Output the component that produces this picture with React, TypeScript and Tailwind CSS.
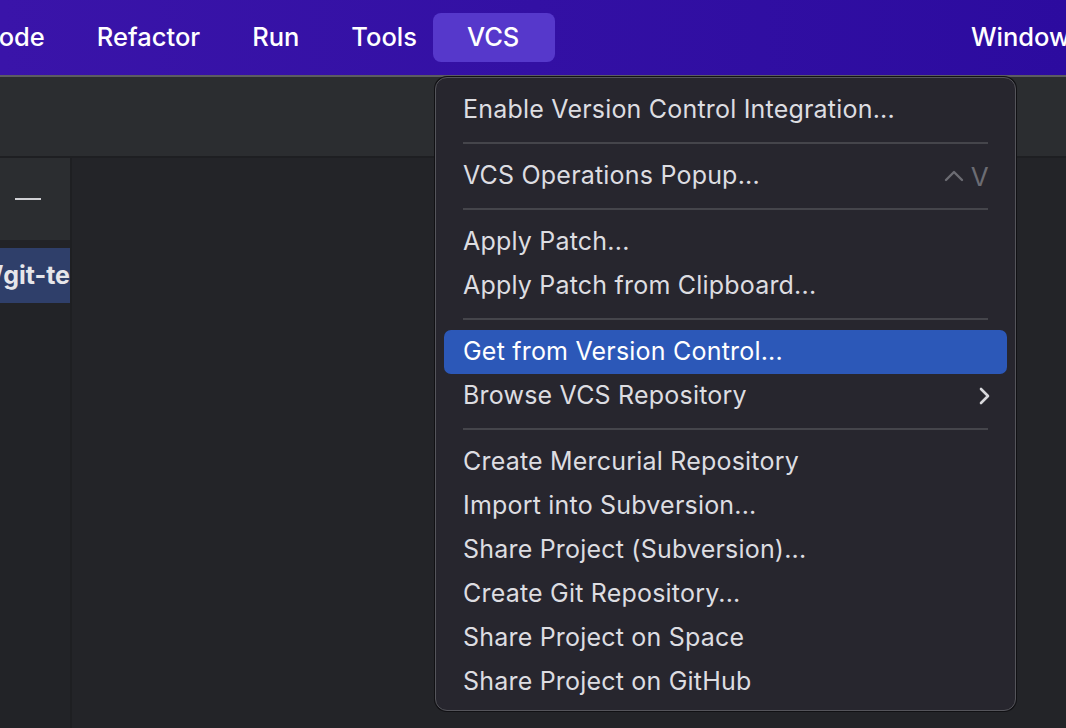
import React from "react";

const font = { fontFamily: "Inter, 'Noto Sans', sans-serif" };

type Item = { label: string; shortcut?: string; submenu?: boolean; active?: boolean } | "sep";

const items: Item[] = [
  { label: "Enable Version Control Integration..." },
  "sep",
  { label: "VCS Operations Popup...", shortcut: "^V" },
  "sep",
  { label: "Apply Patch..." },
  { label: "Apply Patch from Clipboard..." },
  "sep",
  { label: "Get from Version Control...", active: true },
  { label: "Browse VCS Repository", submenu: true },
  "sep",
  { label: "Create Mercurial Repository" },
  { label: "Import into Subversion..." },
  { label: "Share Project (Subversion)..." },
  { label: "Create Git Repository..." },
  { label: "Share Project on Space" },
  { label: "Share Project on GitHub" },
];

function MenuBar() {
  return (
    <div className="flex h-[75px] items-center overflow-hidden whitespace-nowrap bg-gradient-to-r from-[#3a14a9] via-[#3310a4] to-[#2c0b9f] text-[25.5px] font-medium text-white">
      <span className="-ml-[46px] px-[26px]">Code</span>
      <span className="px-[26px]">Refactor</span>
      <span className="px-[26px]">Run</span>
      <span className="px-[26px]">Tools</span>
      <span className="-ml-[10px] flex h-[49px] items-center rounded-[8px] bg-[#5638cb] pl-[34px] pr-[36px]">VCS</span>
      <span className="flex-1" />
      <span className="w-[95px] shrink-0">Window</span>
    </div>
  );
}

function VcsMenu() {
  return (
    <div className="absolute left-[435px] top-[77px] w-[581px] rounded-[12px] border border-[#55555b] bg-[#27262e] px-[8px] pb-[6px] pt-[10px] text-[25px] tracking-[0.2px] text-[#dddde1] shadow-[0_0_0_1px_#111114]">
      {items.map((it, i) =>
        it === "sep" ? (
          <div key={i} className="flex h-[22px] items-center px-[19px]">
            <div className="h-[2px] w-full bg-[#45454b]" />
          </div>
        ) : (
          <div
            key={i}
            className={
              "flex h-[44px] items-center rounded-[7px] pl-[19px] pr-[18px] " +
              (it.active ? "bg-[#2c58b8] text-white" : "")
            }
          >
            <span className="flex-1">{it.label}</span>
            {it.shortcut && (
              <span className="flex items-center gap-[6px] text-[#6c6c73]">
                <svg width="22" height="14" viewBox="0 0 22 14" fill="none" stroke="#6c6c73" strokeWidth="2.4" strokeLinecap="round" strokeLinejoin="round">
                  <path d="M3 11 L11 3 L19 11" />
                </svg>
                <span className="text-[26px]">V</span>
              </span>
            )}
            {it.submenu && (
              <svg width="14" height="20" viewBox="0 0 14 20" fill="none" stroke="#d8d8dc" strokeWidth="2.6" strokeLinecap="round" strokeLinejoin="round" className="-mr-[3px]">
                <path d="M3 3 L10 10 L3 17" />
              </svg>
            )}
          </div>
        )
      )}
    </div>
  );
}

export default function App() {
  return (
    <div className="relative h-[728px] w-[1066px] overflow-hidden bg-[#232428]" style={font}>
      <MenuBar />
      <div className="h-[2px] bg-[#5c5c61]" />
      <div className="h-[79px] bg-[#2b2d30]" />
      <div className="h-[2px] bg-[#1e1f22]" />
      <div className="flex h-[570px]">
        <div className="flex w-[70px] flex-col bg-[#222327]">
          <div className="flex h-[82px] items-center bg-[#2b2d30] pl-[15px]">
            <div className="h-[2px] w-[26px] bg-[#d0d0d4]" />
          </div>
          <div className="h-[8px]" />
          <div className="flex h-[55px] items-center justify-end overflow-hidden whitespace-nowrap bg-[#2f3f6a] text-[25px] font-bold text-[#e6e6ea]">
            /git-te
          </div>
        </div>
        <div className="w-[2px] bg-[#1e1f22]" />
        <div className="flex-1 bg-[#232428]" />
      </div>
      <VcsMenu />
    </div>
  );
}
